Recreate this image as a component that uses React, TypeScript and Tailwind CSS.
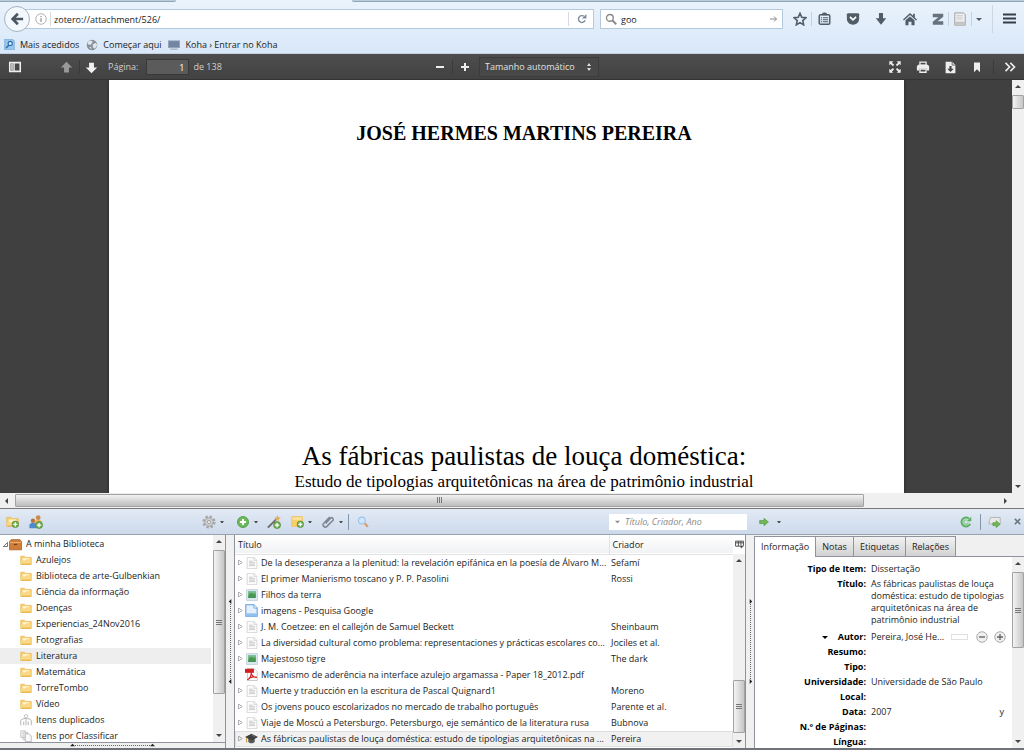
import type { ReactNode } from 'react'
import { clsx } from 'clsx'

const COLLECTIONS = [
  'Azulejos',
  'Biblioteca de arte-Gulbenkian',
  'Ciência da informação',
  'Doenças',
  'Experiencias_24Nov2016',
  'Fotografias',
  'Literatura',
  'Matemática',
  'TorreTombo',
  'Vídeo',
]

type ItemKind = 'document' | 'artwork' | 'webpage' | 'pdf' | 'thesis'

const ITEMS: { kind: ItemKind; title: string; creator: string }[] = [
  { kind: 'document', title: 'De la desesperanza a la plenitud: la revelación epifánica en la poesía de Álvaro M...', creator: 'Sefamí' },
  { kind: 'document', title: 'El primer Manierismo toscano y P. P. Pasolini', creator: 'Rossi' },
  { kind: 'artwork', title: 'Filhos da terra', creator: '' },
  { kind: 'webpage', title: 'imagens - Pesquisa Google', creator: '' },
  { kind: 'document', title: 'J. M. Coetzee: en el callejón de Samuel Beckett', creator: 'Sheinbaum' },
  { kind: 'document', title: 'La diversidad cultural como problema: representaciones y prácticas escolares co...', creator: 'Jociles et al.' },
  { kind: 'artwork', title: 'Majestoso tigre', creator: 'The dark' },
  { kind: 'pdf', title: 'Mecanismo de aderência na interface azulejo argamassa - Paper 18_2012.pdf', creator: '' },
  { kind: 'document', title: 'Muerte y traducción en la escritura de Pascal Quignard1', creator: 'Moreno' },
  { kind: 'document', title: 'Os jovens pouco escolarizados no mercado de trabalho português', creator: 'Parente et al.' },
  { kind: 'document', title: 'Viaje de Moscú a Petersburgo. Petersburgo, eje semántico de la literatura rusa', creator: 'Bubnova' },
  { kind: 'thesis', title: 'As fábricas paulistas de louça doméstica: estudo de tipologias arquitetônicas na ...', creator: 'Pereira' },
]

const TABS = ['Informação', 'Notas', 'Etiquetas', 'Relações']

function Svg({ size = 14, box = 16, className, children }: { size?: number; box?: number; className?: string; children: ReactNode }) {
  return (
    <svg width={size} height={size} viewBox={`0 0 ${box} ${box}`} fill="none" className={clsx('shrink-0', className)} aria-hidden="true">
      {children}
    </svg>
  )
}

function Caret({ dir = 'down', className }: { dir?: 'up' | 'down' | 'left' | 'right'; className?: string }) {
  const paths = { up: 'M0 4h6L3 1z', down: 'M0 2h6L3 5z', left: 'M4 0v6L1 3z', right: 'M2 0v6l3-3z' }
  return (
    <svg width="6" height="6" viewBox="0 0 6 6" className={clsx('shrink-0 fill-current', className)} aria-hidden="true">
      <path d={paths[dir]} />
    </svg>
  )
}

function PlusBadge() {
  return (
    <>
      <circle cx="11.500" cy="11.500" r="4" fill="#6fae52" stroke="#4c8c37" strokeWidth=".8" />
      <path d="M11.500 9v5M9 11.500h5" stroke="#fff" strokeWidth="1.500" />
    </>
  )
}

function FolderShape() {
  return (
    <>
      <path d="M1 3h5l1.500 1.500H15V14H1z" fill="#f5ce6d" stroke="#e8b95a" />
      <path d="M3.500 5.500h9v6h-9z" fill="#fff3cf" />
      <path d="M1.500 8.500H7L8.500 7h6v6.500h-13z" fill="#fbd983" />
      <path d="M2 13.500h12.500" stroke="#e2a63b" />
    </>
  )
}

function ItemIcon({ kind }: { kind: ItemKind }) {
  if (kind === 'artwork') {
    return (
      <Svg size={12}>
        <rect x=".5" y=".5" width="15" height="15" rx="1" fill="#dbe7f0" stroke="#b9c9d6" />
        <rect x="3" y="3" width="10" height="9" fill="#5fae60" />
        <path d="M3 9l4-4 3 3 3-2v6H3z" fill="#479657" />
        <path d="M3 3h10v2H3z" fill="#7fc0a0" />
      </Svg>
    )
  }
  if (kind === 'webpage') {
    return (
      <Svg size={13}>
        <path d="M1 1h10l4 4v10H1z" fill="#e4f1fd" stroke="#5b9de0" strokeWidth="1.300" />
        <path d="M11 1v4h4" fill="#fff" stroke="#5b9de0" />
        <path d="M1.500 11.500h13V15h-13z" fill="#8fc0ee" />
      </Svg>
    )
  }
  if (kind === 'pdf') {
    return (
      <Svg size={13}>
        <path d="M3 .5h8l4 4v11H3z" fill="#fff" stroke="#bbb" />
        <path d="M0 1h11v5H0z" fill="#d42020" />
        <path d="M3 14.500c3-2 5-6 4.500-9C8 9 11 12 14.500 11.500 10 10 6 11 3 14.500z" stroke="#d42020" strokeWidth="1.500" />
      </Svg>
    )
  }
  if (kind === 'thesis') {
    return (
      <Svg size={13}>
        <path d="M4 7v5c2 2.500 6 2.500 8 0V7z" fill="#5a5a5a" />
        <path d="M8 2l8 4-8 4.500L0 6z" fill="#3f3f3f" />
        <path d="M2 7v6" stroke="#c29030" strokeWidth="1.200" />
        <path d="M8 3.500l4.500 2.300" stroke="#777" />
      </Svg>
    )
  }
  return (
    <Svg size={12}>
      <path d="M1.500.5h9l4 4v11h-13z" fill="#fcfcfc" stroke="#cdcdcd" />
      <path d="M10.500.5v4h4" stroke="#cdcdcd" />
      <path d="M4 5.500h5M4 7.500h8M4 9.500h8M4 11.500h8" stroke="#bdbdbd" />
    </Svg>
  )
}

function IconButton({ label, className, children }: { label: string; className?: string; children: ReactNode }) {
  return (
    <button type="button" aria-label={label} title={label} className={clsx('flex shrink-0 items-center justify-center', className)}>
      {children}
    </button>
  )
}

// before / size / after are relative lengths along the track
function Scrollbar({
  vertical = false,
  before,
  size,
  after,
  grip = true,
  className,
}: {
  vertical?: boolean
  before: number
  size: number
  after: number
  grip?: boolean
  className?: string
}) {
  return (
    <div
      aria-hidden="true"
      className={clsx('flex shrink-0 bg-[#f0f0f0] text-[#444]', vertical ? 'w-3 flex-col' : 'h-[15px]', className)}
    >
      <span className={clsx('flex shrink-0 items-center justify-center', vertical ? 'h-3.5' : 'w-3.5')}>
        <Caret dir={vertical ? 'up' : 'left'} />
      </span>
      <span className="basis-0" style={{ flexGrow: before }} />
      <span
        className={clsx(
          'flex basis-0 items-center justify-center rounded-[1px] border border-[#a2a2a2]',
          vertical ? 'bg-linear-to-r from-[#f4f4f4] to-[#c6c6c6]' : 'my-px bg-linear-to-b from-[#f2f2f2] to-[#bcbcbc]',
        )}
        style={{ flexGrow: size }}
      >
        {grip && (
          <svg width="7" height="7" viewBox="0 0 7 7" className={vertical ? '' : 'rotate-90'}>
            <path d="M0 1.500h6M0 3.500h6M0 5.500h6" stroke="#777" />
          </svg>
        )}
      </span>
      <span className="basis-0" style={{ flexGrow: after }} />
      <span className={clsx('flex shrink-0 items-center justify-center', vertical ? 'h-3.5' : 'w-3.5')}>
        <Caret dir={vertical ? 'down' : 'right'} />
      </span>
    </div>
  )
}

function Splitter({ dir }: { dir: 'left' | 'right' }) {
  return (
    <div className="flex w-2 shrink-0 flex-col items-center justify-center bg-[#f0f0f0] text-[#222]">
      <Caret dir={dir} className="size-[5px]" />
      <span className="h-[75px] border-l border-dotted border-[#666]" />
      <Caret dir={dir} className="size-[5px]" />
    </div>
  )
}

function BrowserChrome() {
  return (
    <header className="bg-linear-to-b from-[#eaf3fc] to-[#d8e7f8]">
      <div className="flex h-0.5">
        <span className="w-44 rounded-br-md border-b border-[#8fa7b8] bg-[#b9cddb]" />
        <span className="w-44" />
        <span className="flex-1 rounded-bl-md border-b border-[#8fa7b8] bg-[#b9cddb]" />
      </div>

      <div className="flex h-[33px] items-center pr-2 pl-1">
        <IconButton label="Recuar" className="z-10 size-[26px] rounded-full border border-[#a3b3c4] bg-[#f3f8fd]">
          <Svg size={14}>
            <path d="M9 2L3 8l6 6M3.500 8H15" stroke="#4b5661" strokeWidth="3" />
          </Svg>
        </IconButton>
        <div className="-ml-2 flex h-5 flex-1 items-center border border-[#b5c9dc] bg-white pr-1.5 pl-3">
          <Svg size={12}>
            <circle cx="8" cy="8" r="7" stroke="#999" />
            <path d="M8 7v5M8 4v1.500" stroke="#888" strokeWidth="1.500" />
          </Svg>
          <span className="mx-[3px] h-3.5 w-px bg-[#d5dbe1]" />
          <input aria-label="Endereço" defaultValue="zotero://attachment/526/" className="h-4 min-w-0 flex-1 bg-transparent pt-px outline-none" />
          <span className="mr-2 h-3.5 w-px bg-[#d5dbe1]" />
          <IconButton label="Recarregar">
            <Svg size={10}>
              <path d="M13 10A5.500 5.500 0 1 1 11 3.500" stroke="#7c8b99" strokeWidth="2.200" />
              <path d="M15 0v7H8z" fill="#7c8b99" />
            </Svg>
          </IconButton>
        </div>
        <div className="ml-1.5 flex h-5 w-[183px] items-center gap-1 border border-[#b5c9dc] bg-white px-1">
          <Svg size={12}>
            <circle cx="6.500" cy="6.500" r="4.500" stroke="#888" strokeWidth="1.800" />
            <path d="M10 10l5 5" stroke="#888" strokeWidth="2.400" />
          </Svg>
          <input aria-label="Pesquisar" defaultValue="goo" className="h-4 min-w-0 flex-1 bg-transparent pt-px outline-none" />
          <IconButton label="Ir">
            <Svg size={8}>
              <path d="M0 8h13M8 3l5 5-5 5" stroke="#888" strokeWidth="2" />
            </Svg>
          </IconButton>
        </div>

        <div className="ml-2.5 flex items-center text-[#505d69]">
          <IconButton label="Marcadores">
            <Svg size={14}>
              <path d="M8 1.500l2 4.500 4.800.5-3.600 3.300 1 4.900L8 12.200l-4.200 2.500 1-4.900L1.200 6.500 6 6z" stroke="currentColor" strokeWidth="1.800" />
            </Svg>
          </IconButton>
          <span className="mx-1 h-3.5 w-px bg-[#c5d3e1]" />
          <IconButton label="Lista de marcadores" className="ml-0.5">
            <Svg size={13}>
              <rect x="1.500" y="3.500" width="13" height="11.500" rx="1.500" stroke="currentColor" strokeWidth="1.800" />
              <path d="M4.500 4a3.500 3.500 0 0 1 7 0" fill="currentColor" />
              <path d="M3.500 7h1.500M3.500 9.500h1.500M3.500 12h1.500M6 7h6.500M6 9.500h6.500M6 12h6.500" stroke="currentColor" strokeWidth="1.300" />
            </Svg>
          </IconButton>
          <IconButton label="Pocket" className="ml-[15px]">
            <Svg size={14}>
              <path d="M2 1.500h12l1 1V8c0 4-3.500 6.500-7 6.500S1 12 1 8V2.500z" fill="currentColor" />
              <path d="M4.500 5.500L8 9l3.500-3.500" stroke="#fff" strokeWidth="2" />
            </Svg>
          </IconButton>
          <IconButton label="Transferências" className="ml-3.5">
            <Svg size={14}>
              <path d="M5.700 1h4.600v6H14l-6 7.500L2 7h3.700z" fill="currentColor" />
            </Svg>
          </IconButton>
          <IconButton label="Página inicial" className="ml-[15px]">
            <Svg size={14}>
              <path d="M8 1L0 8.500l1 1.200L8 3.500l7 6.200 1-1.200-2.500-2.300V2h-2v2.300z" fill="currentColor" />
              <path d="M2.800 9.500L8 5l5.200 4.500V15H9.700v-4H6.300v4H2.800z" fill="currentColor" />
            </Svg>
          </IconButton>
          <IconButton label="Zotero" className="ml-[15px]">
            <Svg size={12}>
              <path d="M1 1h14v4L7.500 11H15v4.500H1v-4L8.500 5.500H1z" fill="#66727e" />
            </Svg>
          </IconButton>
          <span className="mx-1 h-3.5 w-px bg-[#c5d3e1]" />
          <IconButton label="Guardar no Zotero">
            <Svg size={14}>
              <path d="M2 1h10l2 2v12H2z" fill="#eee" stroke="#999" />
              <path d="M4 4h7M4 6h7M4 8h7" stroke="#ccc" />
              <path d="M2.500 11h11v3.500h-11z" fill="#c4c4c4" />
            </Svg>
          </IconButton>
          <span className="mx-1 h-3.5 w-px bg-[#c5d3e1]" />
          <IconButton label="Mais opções">
            <Caret />
          </IconButton>
          <span className="mr-2.5 ml-2.5 h-7 w-px bg-[#cad8e6]" />
          <IconButton label="Abrir menu">
            <Svg size={13}>
              <path d="M0 3h16M0 8h16M0 13h16" stroke="#333e48" strokeWidth="2.600" />
            </Svg>
          </IconButton>
        </div>
      </div>

      <nav className="flex h-[19px] items-center gap-[7px] border-b border-[#c2d2e2] pt-px pl-1">
        <a href="#mais" className="flex items-center gap-[5px]">
          <Svg size={11}>
            <path d="M1 0h11l3 3v13H1z" fill="#9cc7ec" stroke="#6fa3d2" />
            <circle cx="9" cy="6.500" r="3" fill="#dff0ff" stroke="#2a6cab" strokeWidth="1.600" />
            <path d="M7 9l-4 4" stroke="#2a6cab" strokeWidth="2" />
          </Svg>
          Mais acedidos
        </a>
        <a href="#comecar" className="flex items-center gap-[5px]">
          <Svg size={12}>
            <circle cx="8" cy="8" r="7" fill="#858f98" />
            <path d="M3 3l4-1 2 2-3 4-4-1zM9 7l4-2 2 3-3 5-3-2zM4 10l3 1v3z" fill="#dfe5ea" />
          </Svg>
          Começar aqui
        </a>
        <a href="#koha" className="flex items-center gap-[5px]">
          <Svg size={12}>
            <rect x=".5" y="2.500" width="15" height="9" fill="#7285a3" stroke="#94a0b2" />
            <path d="M3 13.500h10" stroke="#9aa7b5" strokeWidth="1.500" />
          </Svg>
          Koha › Entrar no Koha
        </a>
      </nav>
    </header>
  )
}

function PdfToolbar() {
  return (
    <div className="grid h-[26px] grid-cols-[1fr_auto_1fr] items-center border-b border-[#333] bg-linear-to-b from-[#4d4d4d] to-[#424242] px-2 pt-px text-[#d0d0d0]">
      <div className="flex items-center">
        <IconButton label="Barra lateral">
          <Svg size={14}>
            <path d="M2 3h12v10H2z" stroke="#eee" strokeWidth="1.800" />
            <path d="M3 4h3v8H3z" fill="#bbb" />
            <path d="M7 3v10" stroke="#eee" strokeWidth="1.500" />
          </Svg>
        </IconButton>
        <IconButton label="Página anterior" className="ml-[38px]">
          <Svg size={13}>
            <path d="M8 1l7 7h-4v6H5V8H1z" fill="#999" />
          </Svg>
        </IconButton>
        <span className="mr-[5px] ml-1.5 h-3.5 w-px bg-[#3a3a3a]" />
        <IconButton label="Página seguinte">
          <Svg size={13}>
            <path d="M8 15L1 8h4V2h6v6h4z" fill="#f0f0f0" />
          </Svg>
        </IconButton>
        <label htmlFor="page" className="ml-2.5">
          Página:
        </label>
        <input
          id="page"
          defaultValue="1"
          className="mr-1 ml-2 h-4 w-[43px] border border-[#383838] bg-[#5b5b5b] px-1 text-right text-white outline-none"
        />
        <span>de 138</span>
      </div>
      <div className="flex items-center gap-[7px] pl-2.5">
        <IconButton label="Reduzir">
          <Svg size={10} box={10}>
            <path d="M1 5h8" stroke="#eee" strokeWidth="2" />
          </Svg>
        </IconButton>
        <span className="h-3.5 w-px bg-[#3a3a3a]" />
        <IconButton label="Ampliar">
          <Svg size={10} box={10}>
            <path d="M1 5h8M5 1v8" stroke="#eee" strokeWidth="2" />
          </Svg>
        </IconButton>
        <div className="relative ml-0.5">
          <select aria-label="Zoom" className="h-5 w-[120px] appearance-none border border-[#3c3c3c] bg-[#484848] px-[5px] text-[#e0e0e0] outline-none">
            <option>Tamanho automático</option>
          </select>
          <Svg size={8} box={8} className="pointer-events-none absolute top-1.5 right-1.5">
            <path d="M4 0l2 3H2zM4 8l2-3H2z" fill="#ddd" />
          </Svg>
        </div>
      </div>
      <div className="flex items-center justify-end gap-3.5">
        <IconButton label="Modo de apresentação">
          <Svg size={14}>
            <path d="M1.500 1.500h4.500L4.500 3 7 5.500 5.500 7 3 4.500 1.500 6zM14.500 1.500V6L13 4.500 10.500 7 9 5.500 11.500 3 10 1.500zM1.500 14.500V10L3 11.500 5.500 9 7 10.500 4.500 13 6 14.500zM14.500 14.500H10l1.500-1.500L9 10.500 10.500 9l2.500 2.500 1.500-1.500z" fill="#eee" />
          </Svg>
        </IconButton>
        <IconButton label="Imprimir">
          <Svg size={14}>
            <path d="M4.500 2.500h7V6h-7z" stroke="#eee" strokeWidth="1.500" />
            <path d="M2.500 5.500h11l1.500 1.500v5h-2.500v-2h-9v2H1V7z" fill="#eee" />
            <path d="M4.500 10.500h7V14h-7z" stroke="#eee" strokeWidth="1.500" />
          </Svg>
        </IconButton>
        <IconButton label="Transferir">
          <Svg size={13}>
            <path d="M2 1h8l4 4v10H2z" fill="#eee" />
            <path d="M10 1v4h4" stroke="#555" />
            <path d="M6.700 6h2.600v3.500H12l-4 4-4-4h2.700z" fill="#444" />
          </Svg>
        </IconButton>
        <IconButton label="Vista atual">
          <Svg size={12}>
            <path d="M4 2h8v13l-4-4-4 4z" fill="#eee" />
          </Svg>
        </IconButton>
        <span className="-mx-1 h-3.5 w-px bg-[#3a3a3a]" />
        <IconButton label="Ferramentas">
          <Svg size={12}>
            <path d="M2 2.500L7.500 8 2 13.500M8.500 2.500L14 8l-5.500 5.500" stroke="#eee" strokeWidth="2.200" />
          </Svg>
        </IconButton>
      </div>
    </div>
  )
}

function PdfViewer() {
  return (
    <main className="flex min-h-0 flex-1 flex-col">
      <div className="flex min-h-0 flex-1">
        <div className="min-h-0 flex-1 overflow-hidden bg-[#404040]">
          <article className="mx-auto h-[1100px] w-[795px] bg-white pt-[41px] text-center font-['Liberation_Serif',serif] text-black shadow-[0_0_3px_#222]">
            <p className="pl-9 text-[20px] leading-6 font-bold">JOSÉ HERMES MARTINS PEREIRA</p>
            <h1 className="mt-[295px] pl-9 text-[27px] leading-8">As fábricas paulistas de louça doméstica:</h1>
            <p className="pl-9 text-[17px] leading-5">Estudo de tipologias arquitetônicas na área de patrimônio industrial</p>
          </article>
        </div>
        <Scrollbar vertical before={1} size={12} after={372} grip={false} />
      </div>
      <div className="flex bg-[#f0f0f0]">
        <Scrollbar before={1} size={850} after={134} className="flex-1" />
        <span className="w-3" />
      </div>
    </main>
  )
}

function ZoteroToolbar() {
  return (
    <div className="flex h-[27px] shrink-0 border-y border-t-[#777] border-b-[#98a3b2] bg-linear-to-b from-[#e2eaf5] to-[#cddaeb] text-[#222]">
      <div className="flex w-[234px] shrink-0 items-center pr-2.5 pl-1.5">
        <IconButton label="Nova coleção">
          <Svg size={13}>
            <FolderShape />
            <PlusBadge />
          </Svg>
        </IconButton>
        <IconButton label="Novo grupo" className="ml-2.5">
          <Svg>
            <circle cx="10.500" cy="3" r="2.700" fill="#c98a4a" />
            <path d="M6.500 11V7.500c0-2.500 8-2.500 8 0V11z" fill="#efb04f" />
            <circle cx="4.500" cy="6.500" r="2.500" fill="#b9733a" />
            <path d="M.5 15v-3.500c0-3 8-3 8 0V15z" fill="#4d8bd0" />
            <PlusBadge />
          </Svg>
        </IconButton>
        <IconButton label="Acções" className="ml-auto gap-1">
          <Svg>
            <circle cx="8" cy="8" r="6" stroke="#a5a5a5" strokeWidth="3" strokeDasharray="2.600 2.110" />
            <circle cx="8" cy="8" r="4.800" fill="#cfcfcf" stroke="#a0a0a0" />
            <circle cx="8" cy="8" r="1.800" fill="#f5f5f5" stroke="#999" />
          </Svg>
          <Caret className="size-1" />
        </IconButton>
      </div>
      <div className="flex min-w-0 flex-1 items-center pl-0.5">
        <IconButton label="Novo item" className="gap-1">
          <Svg>
            <circle cx="8" cy="8" r="6.300" fill="#6cb95c" stroke="#4f9a42" />
            <path d="M8 4.500v7M4.500 8h7" stroke="#fff" strokeWidth="2.400" />
          </Svg>
          <Caret className="size-1" />
        </IconButton>
        <IconButton label="Adicionar por identificador" className="ml-[9px]">
          <Svg>
            <path d="M1 14.500L10.500 5" stroke="#6a6a6a" strokeWidth="2.200" />
            <path d="M12 0l1 2.500L16 3l-2.500 1.500L14 7l-2-1.500L9.500 7l.7-2.500L8 3l3-.5z" fill="#e0ab5c" />
            <PlusBadge />
          </Svg>
        </IconButton>
        <IconButton label="Nova nota" className="ml-2.5 gap-1">
          <Svg size={13}>
            <path d="M1 2h13v12H1z" fill="#f8d06a" stroke="#ecc05d" />
            <path d="M2 3h11v3H2z" fill="#fde3a0" />
            <PlusBadge />
          </Svg>
          <Caret className="size-1" />
        </IconButton>
        <IconButton label="Adicionar anexo" className="ml-2.5 gap-1">
          <Svg size={13}>
            <path d="M4.500 10.500L10.500 4a1.900 1.900 0 0 1 2.800 2.800L6 14a2.600 2.600 0 0 1-3.800-3.800L9.500 2.500" stroke="#7f8892" strokeWidth="1.900" />
          </Svg>
          <Caret className="size-1" />
        </IconButton>
        <span className="mr-2 ml-[5px] h-4 w-px bg-[#8494a8]" />
        <IconButton label="Pesquisa avançada">
          <Svg size={12}>
            <circle cx="6.500" cy="6" r="4.500" fill="#cfe6fb" stroke="#9fc3e8" strokeWidth="1.500" />
            <path d="M10.500 10l4 4.500" stroke="#dc9a5e" strokeWidth="2.800" />
          </Svg>
        </IconButton>
        <div className="ml-auto flex h-4 w-[138px] items-center gap-[5px] bg-white px-1.5">
          <Caret className="size-[5px] text-[#888]" />
          <input aria-label="Procurar" placeholder="Título, Criador, Ano" className="min-w-0 flex-1 bg-transparent italic outline-none placeholder:text-[#888]" />
        </div>
      </div>
      <div className="flex w-[277px] shrink-0 items-center pr-[3px] pl-3">
        <IconButton label="Localizar" className="gap-2">
          <Svg size={10}>
            <path d="M1 5.500h7V2l7 6-7 6v-3.500H1z" fill="#6fb855" stroke="#4f973d" />
          </Svg>
          <Caret className="size-1" />
        </IconButton>
        <IconButton label="Sincronizar" className="ml-auto">
          <Svg size={12}>
            <path d="M13.500 10.500A6 6 0 1 1 12 3.500" stroke="#5cb160" strokeWidth="2.600" />
            <path d="M11 8.500A3 3 0 1 1 9.500 5.500" stroke="#7cc57e" strokeWidth="1.500" />
            <path d="M15 1v6H9z" fill="#5cb160" />
          </Svg>
        </IconButton>
        <span className="mr-[7px] ml-2 h-4 w-px bg-[#8494a8]" />
        <IconButton label="Abrir em separador">
          <Svg size={13}>
            <path d="M3 3h12v8H1z" fill="#e9e9e9" stroke="#aaa" />
            <path d="M6 9.500h4V7l5 4.300-5 4.200V13H6z" fill="#6fb855" stroke="#4f973d" strokeWidth=".8" />
          </Svg>
        </IconButton>
        <IconButton label="Fechar" className="ml-[13px]">
          <Svg size={7} box={8}>
            <path d="M1 1l6 6M7 1L1 7" stroke="#6b7580" strokeWidth="1.800" />
          </Svg>
        </IconButton>
      </div>
    </div>
  )
}

function TreeRow({ icon, label, selected }: { icon: ReactNode; label: string; selected?: boolean }) {
  return (
    <li>
      <button type="button" className={clsx('flex h-4 w-full items-center gap-1 pl-5 text-left', selected && 'bg-[#eeeeee]')}>
        {icon}
        {label}
      </button>
    </li>
  )
}

function CollectionsPane() {
  return (
    <aside className="flex w-[226px] shrink-0 flex-col border-r border-[#8f949c] bg-white">
      <div className="flex min-h-0 flex-1 border-b border-[#8f949c]">
        <ul className="min-w-0 flex-1 overflow-hidden pt-px pr-0.5">
          <li>
            <button type="button" className="flex h-4 w-full items-center gap-1 pl-[3px] text-left">
              <span className="flex items-center gap-px">
                <Svg size={5} box={6}>
                  <path d="M5.500.5v5h-5z" stroke="#555" />
                </Svg>
                <Svg size={13}>
                  <path d="M2.500 2h11l2 2.500V14.500H.5V4.500z" fill="#d07e37" stroke="#a8602a" />
                  <path d="M1 5.500h14" stroke="#efba86" />
                  <path d="M6 8h4" stroke="#7d3f11" strokeWidth="1.500" />
                </Svg>
              </span>
              A minha Biblioteca
            </button>
          </li>
          {COLLECTIONS.map((name) => (
            <TreeRow
              key={name}
              label={name}
              selected={name === 'Literatura'}
              icon={
                <Svg size={12}>
                  <FolderShape />
                </Svg>
              }
            />
          ))}
          <TreeRow
            label="Itens duplicados"
            icon={
              <Svg size={12}>
                <circle cx="8" cy="3" r="2.300" stroke="#b3b3b3" />
                <path d="M1 15V9c0-4 14-4 14 0v6M5 15v-5M11 15v-5M8 7v8" stroke="#b3b3b3" strokeWidth="1.300" />
              </Svg>
            }
          />
          <TreeRow
            label="Itens por Classificar"
            icon={
              <Svg size={12}>
                <path d="M1 1h6v9H1zM4 3h6v10H4z" fill="#f5f5f5" stroke="#bbb" />
                <path d="M7 5h5l3 3v7.500H7z" fill="#fafafa" stroke="#aaa" />
              </Svg>
            }
          />
        </ul>
        <Scrollbar vertical before={1} size={144} after={34} />
      </div>
      <div className="flex h-[5px] shrink-0 items-center justify-center bg-[#f0f0f0] text-[#222]">
        <Caret dir="up" className="size-[5px]" />
        <span className="w-[75px] border-t border-dotted border-[#666]" />
        <Caret dir="up" className="size-[5px]" />
      </div>
    </aside>
  )
}

function ItemsPane() {
  return (
    <section className="flex min-w-0 flex-1 flex-col border-x border-[#8f949c] bg-white">
      <div className="flex min-h-0 flex-1">
        <div className="min-w-0 flex-1 overflow-hidden">
          <table className="w-full table-fixed border-collapse">
            <thead>
              <tr className="h-[19px] border-b border-[#e2e2e2] bg-linear-to-b from-white to-[#f1f2f4] text-left">
                <th className="pt-0.5 pb-0 pl-[3px] font-normal">Título</th>
                <th className="w-[124px] border-l border-[#e2e2e2] pt-0.5 pb-0 pl-[3px] font-normal">Criador</th>
              </tr>
            </thead>
            <tbody>
              {ITEMS.map((item) => (
                <tr key={item.title} className={clsx('h-4', item.kind === 'thesis' && 'bg-[#f1f1f1] outline outline-[#dedede] -outline-offset-1')}>
                  <td className="p-0">
                    <div className="flex h-4 items-center pl-[3px]">
                      <Svg size={5} box={6} className={item.kind === 'pdf' ? 'invisible' : ''}>
                        <path d="M.5 0v6l4.500-3z" stroke="#999" />
                      </Svg>
                      <span className="mr-[3px] ml-0.5 flex w-[13px] justify-center">
                        <ItemIcon kind={item.kind} />
                      </span>
                      <span className="whitespace-nowrap">{item.title}</span>
                    </div>
                  </td>
                  <td className="p-0 pl-0.5 whitespace-nowrap">{item.creator}</td>
                </tr>
              ))}
            </tbody>
          </table>
        </div>
        <div className="flex w-3 shrink-0 flex-col">
          <IconButton label="Escolher colunas" className="h-[19px]">
            <Svg size={9}>
              <path d="M1 2h14v9H1zM1 5h14M6 2v9M10.500 2v9" stroke="#444" strokeWidth="1.600" />
              <path d="M8 10h7l-3.500 5z" fill="#333" stroke="#fff" strokeWidth=".6" />
            </Svg>
          </IconButton>
          <Scrollbar vertical before={114} size={52} after={1} className="flex-1" />
        </div>
      </div>
    </section>
  )
}

function Field({ label, children }: { label: ReactNode; children?: ReactNode }) {
  return (
    <div className="flex items-start gap-[5px] py-px leading-[13px]">
      <dt className="flex w-[111px] shrink-0 items-center justify-end gap-2.5 font-bold text-black">{label}</dt>
      <dd className="flex min-h-[13px] min-w-0 flex-1 items-center">{children}</dd>
    </div>
  )
}

function InfoPane() {
  return (
    <section className="flex w-[270px] shrink-0 flex-col bg-[#f0f0f0]">
      <div role="tablist" className="flex h-[22px] shrink-0 items-end border-b border-[#8f949c]">
        {TABS.map((tab, i) => (
          <button
            key={tab}
            type="button"
            role="tab"
            aria-selected={i === 0}
            className={clsx(
              'border-[#8f949c]',
              i === 0 ? '-mb-px h-[21px] border-x border-t bg-white px-1.5' : 'h-5 border-t border-r bg-linear-to-b from-[#f2f2f2] to-[#d2d2d2] px-1.5',
            )}
          >
            {tab}
          </button>
        ))}
      </div>
      <div className="flex min-h-0 flex-1 border-l border-[#8f949c] bg-white">
        <dl className="min-w-0 flex-1 overflow-hidden pt-1 pr-1.5">
          <Field label="Tipo de Item:">Dissertação</Field>
          <Field label="Título:">
            <span className="mb-0.5 pt-px leading-3">As fábricas paulistas de louça doméstica: estudo de tipologias arquitetônicas na área de patrimônio industrial</span>
          </Field>
          <Field
            label={
              <>
                <Caret />
                Autor:
              </>
            }
          >
            <span className="flex-1 whitespace-nowrap">Pereira, José He...</span>
            <span className="mr-2 h-1.5 w-[17px] border border-[#e0e0e0]" />
            <IconButton label="Remover autor">
              <Svg size={12}>
                <circle cx="8" cy="8" r="7" fill="#f0f0f0" stroke="#a8a8a8" strokeWidth="1.300" />
                <path d="M4 8h8" stroke="#666" strokeWidth="1.800" />
              </Svg>
            </IconButton>
            <IconButton label="Adicionar autor" className="ml-1.5">
              <Svg size={12}>
                <circle cx="8" cy="8" r="7" fill="#f0f0f0" stroke="#a8a8a8" strokeWidth="1.300" />
                <path d="M4 8h8M8 4v8" stroke="#666" strokeWidth="1.800" />
              </Svg>
            </IconButton>
          </Field>
          <Field label="Resumo:" />
          <Field label="Tipo:" />
          <Field label="Universidade:">Universidade de São Paulo</Field>
          <Field label="Local:" />
          <Field label="Data:">
            <span className="flex-1">2007</span>
            <span className="pr-0.5">y</span>
          </Field>
          <Field label="N.º de Páginas:" />
          <Field label="Língua:" />
        </dl>
        <Scrollbar vertical before={1} size={76} after={88} />
      </div>
    </section>
  )
}

export default function App() {
  return (
    <div className="flex h-screen flex-col overflow-hidden bg-[#f0f0f0] font-['Open_Sans','Noto_Sans',sans-serif] text-[9px] leading-3 text-[#1c1c1c]">
      <BrowserChrome />
      <PdfToolbar />
      <PdfViewer />
      <ZoteroToolbar />
      <div className="flex h-[215px] shrink-0 border-b-2 border-[#6f7379]">
        <CollectionsPane />
        <Splitter dir="left" />
        <ItemsPane />
        <Splitter dir="right" />
        <InfoPane />
      </div>
    </div>
  )
}
